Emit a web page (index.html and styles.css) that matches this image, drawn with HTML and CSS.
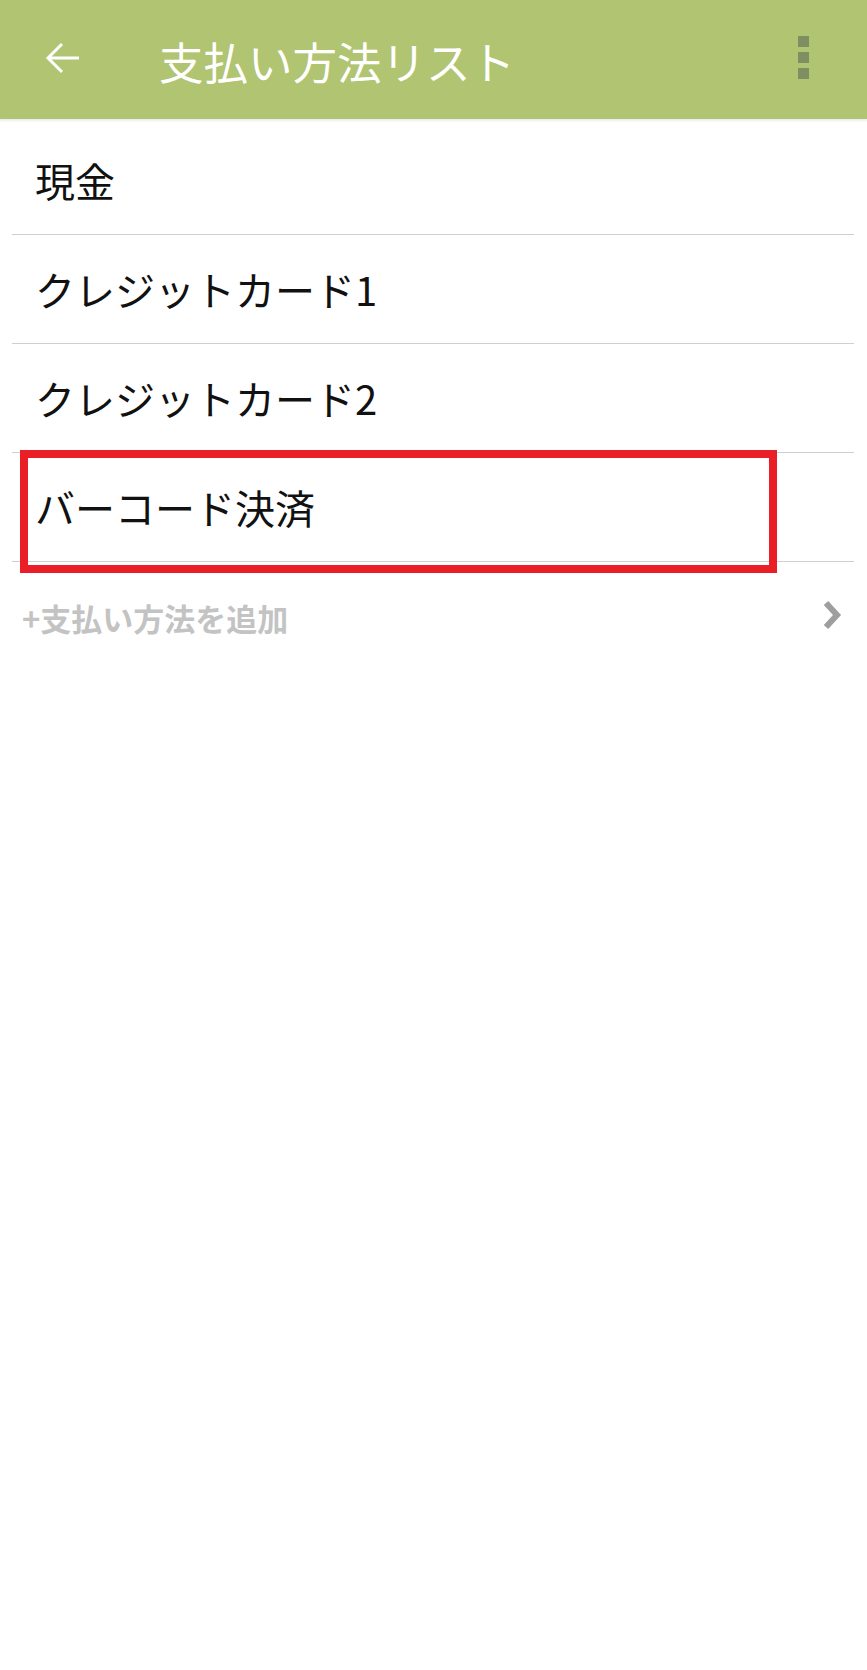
FILE: index.html
```html
<!DOCTYPE html>
<html lang="ja">
<head>
    <meta charset="UTF-8">
    <meta name="viewport" content="width=device-width, initial-scale=1.0">
    <title>支払い方法リスト</title>
    <link rel="stylesheet" href="styles.css">
</head>
<body>
    <header class="app-bar">
        <svg class="back-icon" width="36" height="32" viewBox="0 0 36 32">
            <path d="M34 16H3M17 2L3 16l14 14" fill="none" stroke="#fff" stroke-width="3"/>
        </svg>
        <h1 class="title">支払い方法リスト</h1>
        <div class="menu">
            <span></span>
            <span></span>
            <span></span>
        </div>
    </header>

    <ul class="method-list">
        <li class="method">現金</li>
        <li class="method">クレジットカード1</li>
        <li class="method">クレジットカード2</li>
        <li class="method highlighted">バーコード決済</li>
    </ul>

    <div class="add-row">
        <span class="add-label">+支払い方法を追加</span>
        <svg class="chevron" width="20" height="30" viewBox="0 0 20 30">
            <path d="M4 3l11 12L4 27" fill="none" stroke="#9e9e9e" stroke-width="6"/>
        </svg>
    </div>
</body>
</html>
```

FILE: styles.css
```css
body {
    margin: 0;
    background: #fff;
    font-family: "Noto Sans CJK JP", "Noto Sans", sans-serif;
    color: #111;
}
.app-bar {
    display: flex;
    align-items: center;
    height: 119px;
    padding: 0 58px 0 45px;
    background: #b0c472;
    box-shadow: 0 2px 2px rgba(0, 0, 0, 0.08);
}
.back-icon {
    flex: none;
    margin-top: -3px;
}
.title {
    flex: 1;
    margin: 4px 0 0 78px;
    font-size: 44.5px;
    font-weight: 400;
    color: #fff;
    line-height: 1;
}
.menu {
    display: flex;
    flex-direction: column;
    gap: 5px;
    margin-top: -4px;
}
.menu span {
    width: 11px;
    height: 11px;
    background: #7f8f62;
}
.method-list {
    list-style: none;
    margin: 0;
    padding: 7px 0 0;
}
.method {
    position: relative;
    box-sizing: border-box;
    height: 109px;
    margin: 0 13px 0 12px;
    padding-left: 23px;
    border-bottom: 1px solid #cfcfcf;
    font-size: 40px;
    line-height: 108px;
}
.highlighted::after {
    content: "";
    position: absolute;
    top: -3px;
    left: 8px;
    width: 741px;
    height: 107px;
    border: 8px solid #e91e26;
}
.add-row {
    display: flex;
    align-items: center;
    justify-content: space-between;
    height: 110px;
    padding: 0 25px 0 22px;
}
.add-label {
    font-size: 31px;
    font-weight: 700;
    color: #c3c3c3;
}
.chevron {
    margin-top: -4px;
}
```
